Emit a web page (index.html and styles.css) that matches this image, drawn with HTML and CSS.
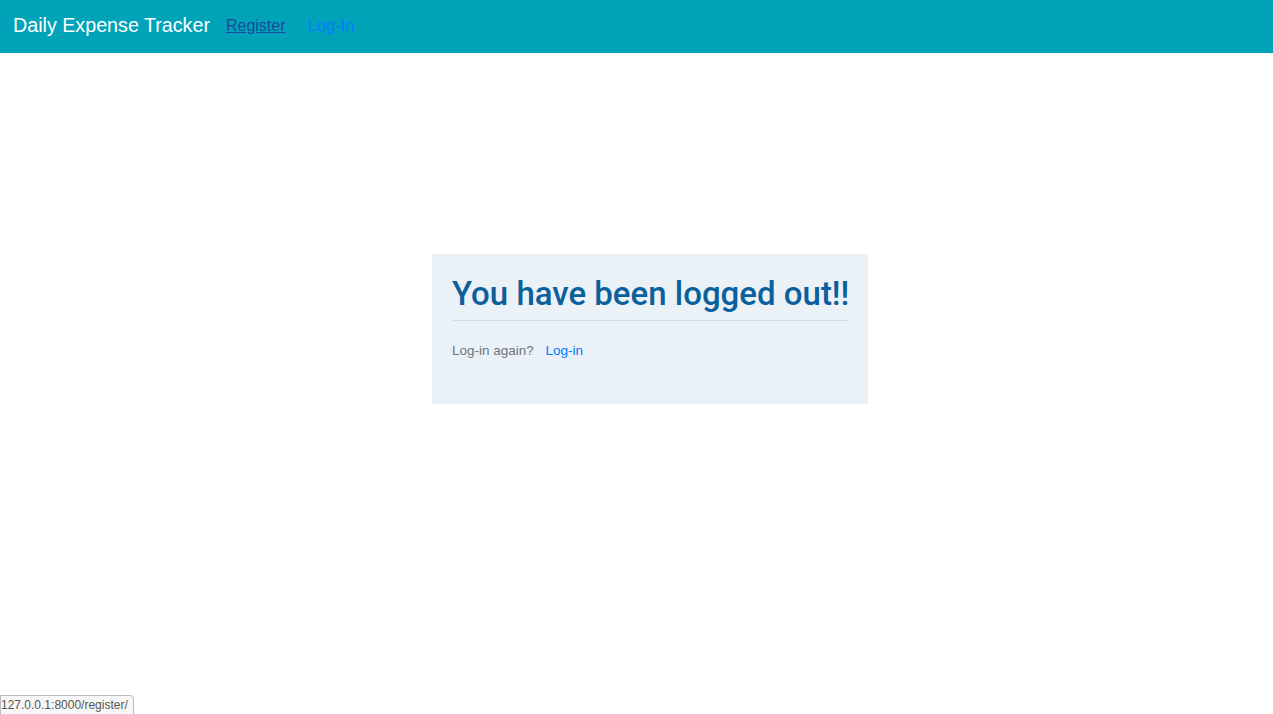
FILE: index.html
```html
<!DOCTYPE html>
<html>
<head>
<meta charset="utf-8">
<link rel="stylesheet" href="styles.css">
</head>
<body>
<nav class="navbar">
  <span class="brand">Daily Expense Tracker</span>
  <a class="nav-link visited" href="#">Register</a>
  <a class="nav-link plain" href="#">Log-In</a>
</nav>
<main class="main">
  <section class="card">
    <h1 class="title">You have been logged out!!</h1>
    <hr class="rule">
    <p class="again">Log-in again? <a class="link" href="#">Log-in</a></p>
  </section>
</main>
<div class="status">127.0.0.1:8000/register/</div>
</body>
</html>
```
FILE: styles.css
```css
html, body {
  margin: 0;
  padding: 0;
  height: 100%;
}
body {
  font-family: "Liberation Sans", Arial, sans-serif;
  background: #ffffff;
  color: #212529;
  display: flex;
  flex-direction: column;
}
.navbar {
  height: 53px;
  background: #00a3b8;
  display: flex;
  align-items: center;
  padding: 0 13px 2px;
  box-sizing: border-box;
}
.brand {
  color: #ffffff;
  font-size: 19.7px;
  margin-right: 16px;
}
.nav-link {
  font-size: 16px;
  margin-right: 22px;
}
.nav-link.visited {
  color: #1a4b9c;
  text-decoration: underline;
}
.nav-link.plain {
  color: #007bff;
  text-decoration: none;
  font-size: 16.5px;
}
.main {
  flex: 1;
  display: flex;
  justify-content: center;
  padding-top: 201px;
  padding-left: 27px;
}
.card {
  width: 436px;
  height: 150px;
  box-sizing: border-box;
  background: #eaf1f7;
  padding: 20px 20px;
}
.title {
  margin: 0;
  font-family: Roboto, "Liberation Sans", sans-serif;
  font-size: 33px;
  font-weight: 500;
  color: #0a5f9c;
  line-height: 40px;
  white-space: nowrap;
}
.rule {
  border: 0;
  border-top: 1px solid #d6dde3;
  margin: 6px 0 0 0;
}
.again {
  margin: 22px 0 0 0;
  font-size: 13.5px;
  color: #6c757d;
}
.link {
  color: #007bff;
  text-decoration: none;
  margin-left: 8px;
}
.status {
  position: fixed;
  left: 0;
  bottom: -3px;
  font-size: 12px;
  color: #555;
  background: #f7f7f7;
  border: 1px solid #bbb;
  border-radius: 0 4px 0 0;
  padding: 2px 5px 4px 0;
}
```
